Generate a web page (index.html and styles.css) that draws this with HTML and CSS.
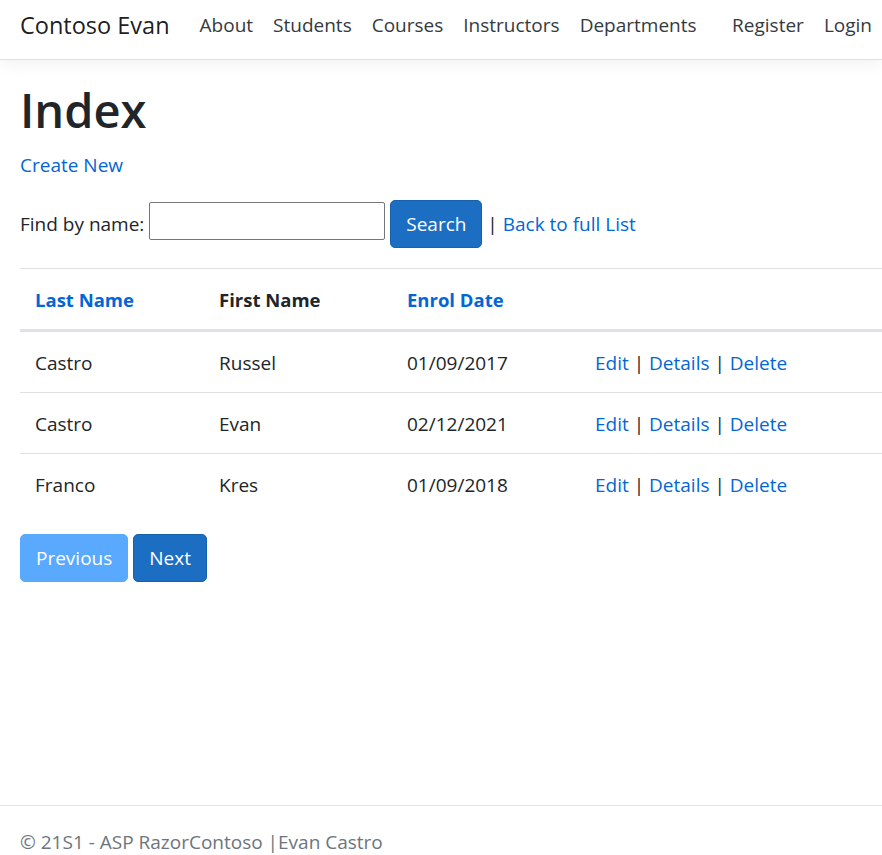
FILE: index.html
```html
<!DOCTYPE html>
<html lang="en">
<head>
<meta charset="utf-8">
<title>Index - Contoso Evan</title>
<link rel="stylesheet" href="styles.css">
</head>
<body>
<header class="site-header">
  <nav class="navbar">
    <a class="brand" href="#">Contoso Evan</a>
    <ul class="nav-list nav-grow">
      <li><a class="nav-link" href="#">About</a></li>
      <li><a class="nav-link" href="#">Students</a></li>
      <li><a class="nav-link" href="#">Courses</a></li>
      <li><a class="nav-link" href="#">Instructors</a></li>
      <li><a class="nav-link" href="#">Departments</a></li>
    </ul>
    <ul class="nav-list">
      <li><a class="nav-link" href="#">Register</a></li>
      <li><a class="nav-link" href="#">Login</a></li>
    </ul>
  </nav>
</header>
<div class="container">
  <main class="main">
    <h1 class="title">Index</h1>
    <p class="para"><a class="link" href="#">Create New</a></p>
    <form class="search-form">
      <p class="para">Find by name: <input class="search-input" type="text" name="SearchString"> <button class="btn btn-primary" type="submit">Search</button> | <a class="link" href="#">Back to full List</a></p>
    </form>
    <table class="table">
      <colgroup>
        <col class="col-a"><col class="col-b"><col class="col-c"><col>
      </colgroup>
      <thead>
        <tr>
          <th><a class="link" href="#">Last Name</a></th>
          <th>First Name</th>
          <th><a class="link" href="#">Enrol Date</a></th>
          <th></th>
        </tr>
      </thead>
      <tbody>
        <tr>
          <td>Castro</td><td>Russel</td><td>01/09/2017</td>
          <td><a class="link" href="#">Edit</a> | <a class="link" href="#">Details</a> | <a class="link" href="#">Delete</a></td>
        </tr>
        <tr>
          <td>Castro</td><td>Evan</td><td>02/12/2021</td>
          <td><a class="link" href="#">Edit</a> | <a class="link" href="#">Details</a> | <a class="link" href="#">Delete</a></td>
        </tr>
        <tr>
          <td>Franco</td><td>Kres</td><td>01/09/2018</td>
          <td><a class="link" href="#">Edit</a> | <a class="link" href="#">Details</a> | <a class="link" href="#">Delete</a></td>
        </tr>
      </tbody>
    </table>
    <div class="pager">
      <a class="btn btn-disabled" href="#">Previous</a>
      <a class="btn btn-primary" href="#">Next</a>
    </div>
  </main>
</div>
<footer class="footer">&copy; 21S1 - ASP RazorContoso |Evan Castro</footer>
</body>
</html>
```
FILE: styles.css
```css
* { box-sizing: border-box; }
html, body { margin: 0; padding: 0; }
body {
  font-family: "Open Sans", "Noto Sans", sans-serif;
  font-size: 19px;
  line-height: 30px;
  color: #212529;
  background: #fff;
  height: 855px;
  overflow: hidden;
  display: flex;
  flex-direction: column;
}
a { text-decoration: none; }
.site-header {
  flex: 0 0 60px;
  border-bottom: 1px solid #e0e0e0;
  box-shadow: 0 5px 15px rgba(0,0,0,.05);
  background: #fff;
  margin-bottom: 20px;
}
.navbar {
  display: flex;
  align-items: flex-start;
  height: 59px;
  padding: 10px 0 0 20px;
}
.brand {
  font-size: 23.5px;
  line-height: 30px;
  color: rgba(0,0,0,.9);
  margin-right: 20px;
  white-space: nowrap;
}
.nav-list {
  display: flex;
  list-style: none;
  margin: 0;
  padding: 0;
}
.nav-grow { flex: 1 1 auto; }
.nav-link {
  display: block;
  padding: 0 10px;
  line-height: 30px;
  color: #343a40;
  white-space: nowrap;
}
.container {
  flex: 1 1 auto;
  min-height: 0;
  padding-left: 20px;
}
.title {
  font-size: 47px;
  line-height: 60px;
  font-weight: 600;
  margin: 0 0 10px;
}
.para { margin: 0 0 20px; }
.search-form { margin: 0; }
.link { color: #0366d6; }
.search-input {
  width: 236px;
  height: 38px;
  border: 1px solid #767676;
  border-radius: 2px;
  font: inherit;
  vertical-align: 3px;
  padding: 1px 2px;
}
.btn {
  display: inline-block;
  font-family: inherit;
  font-size: 19px;
  line-height: 30px;
  padding: 8px 15px;
  border: 1px solid transparent;
  border-radius: 5px;
  color: #fff;
  cursor: pointer;
}
.btn-primary { background: #1b6ec2; border-color: #1861ac; }
.btn-disabled { background: #59a9ff; border-color: #59a9ff; }
.table {
  width: 100%;
  border-collapse: collapse;
  margin-bottom: 20px;
}
.col-a { width: 184px; }
.col-b { width: 188px; }
.col-c { width: 188px; }
.table th, .table td {
  padding: 16px 15px 14px;
  text-align: left;
  vertical-align: top;
  border-top: 1px solid #dee2e6;
  white-space: nowrap;
}
.table th {
  font-size: 18.5px;
  font-weight: 700;
  border-bottom: 3px solid #dee2e6;
}
.pager { display: flex; gap: 5px; }
.footer {
  flex: 0 0 50px;
  min-height: 0;
  height: 50px;
  border-top: 1px solid #e5e5e5;
  padding: 26px 0 0 20px;
  line-height: 20px;
  color: #6c757d;
  white-space: nowrap;
}
```
